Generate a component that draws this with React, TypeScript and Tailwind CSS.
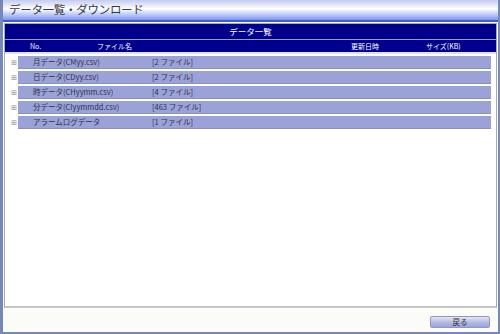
import React from 'react';

const rows = [
  { name: '月データ(CMyy.csv)', count: '[2 ファイル]' },
  { name: '日データ(CDyy.csv)', count: '[2 ファイル]' },
  { name: '時データ(CHyymm.csv)', count: '[4 ファイル]' },
  { name: '分データ(CIyymmdd.csv)', count: '[463 ファイル]' },
  { name: 'アラームログデータ', count: '[1 ファイル]' },
];

const font = { fontFamily: '"Noto Sans CJK JP", "Noto Sans", sans-serif' };

export default function App() {
  return (
    <div
      className="w-[500px] h-[334px] flex flex-col bg-[#fbfbf7] border-l-[3px] border-r-[2px] border-b-[2px] border-[#7489b8] overflow-hidden"
      style={font}
    >
      {/* title bar */}
      <div className="h-[20px] flex items-center px-[6px] bg-gradient-to-b from-[#c4cbee] via-white via-45% to-[#7f95ea] text-[11.5px] text-[#3a3a3a] tracking-tight">
        データ一覧・ダウンロード
      </div>
      <div className="h-[2px] bg-[#3d5ad6]" />

      {/* content panel */}
      <div className="mx-[1px] mt-[1px] h-[285px] flex flex-col bg-white border border-[#a9a9a9] border-b-[2px] border-b-[#c6c6c6]">
        <div className="h-[16px] flex items-center justify-center bg-[#00008c] text-white text-[8.5px] border-b border-[#9a9ab0]">
          データ一覧
        </div>
        <div className="h-[14px] flex items-center bg-[#00008c] text-white text-[7px] border-b-[2px] border-[#e0e0e8]">
          <div className="w-[48px] pl-[25px]">No.</div>
          <div className="w-[295px] pl-[44px]">ファイル名</div>
          <div className="w-[78px] pl-[3px]">更新日時</div>
          <div>サイズ(KB)</div>
        </div>
        <div className="flex flex-col gap-[2px] pt-[2px] pr-[5px]">
          {rows.map((r) => (
            <div key={r.name} className="flex items-center h-[13px]">
              <div className="w-[13px] flex justify-center pl-[4px]">
                <span className="text-[7px] leading-none text-[#888]">⊞</span>
              </div>
              <div className="flex-1 h-full flex items-center bg-[#9aa2d7] border-b border-[#8a90b8] text-[7.5px] text-[#303050]">
                <div className="w-[134px] pl-[15px]">{r.name}</div>
                <div>{r.count}</div>
              </div>
            </div>
          ))}
        </div>
      </div>

      {/* footer */}
      <div className="flex-1 flex items-start justify-end pr-[8px] pt-[8px]">
        <button className="w-[60px] h-[12px] flex items-center justify-center rounded-[2px] bg-gradient-to-b from-[#e4e7f6] via-[#b8bde6] to-[#9ca3d8] border border-[#9096c0] text-[7.5px] text-[#333] leading-none">
          戻る
        </button>
      </div>
    </div>
  );
}
